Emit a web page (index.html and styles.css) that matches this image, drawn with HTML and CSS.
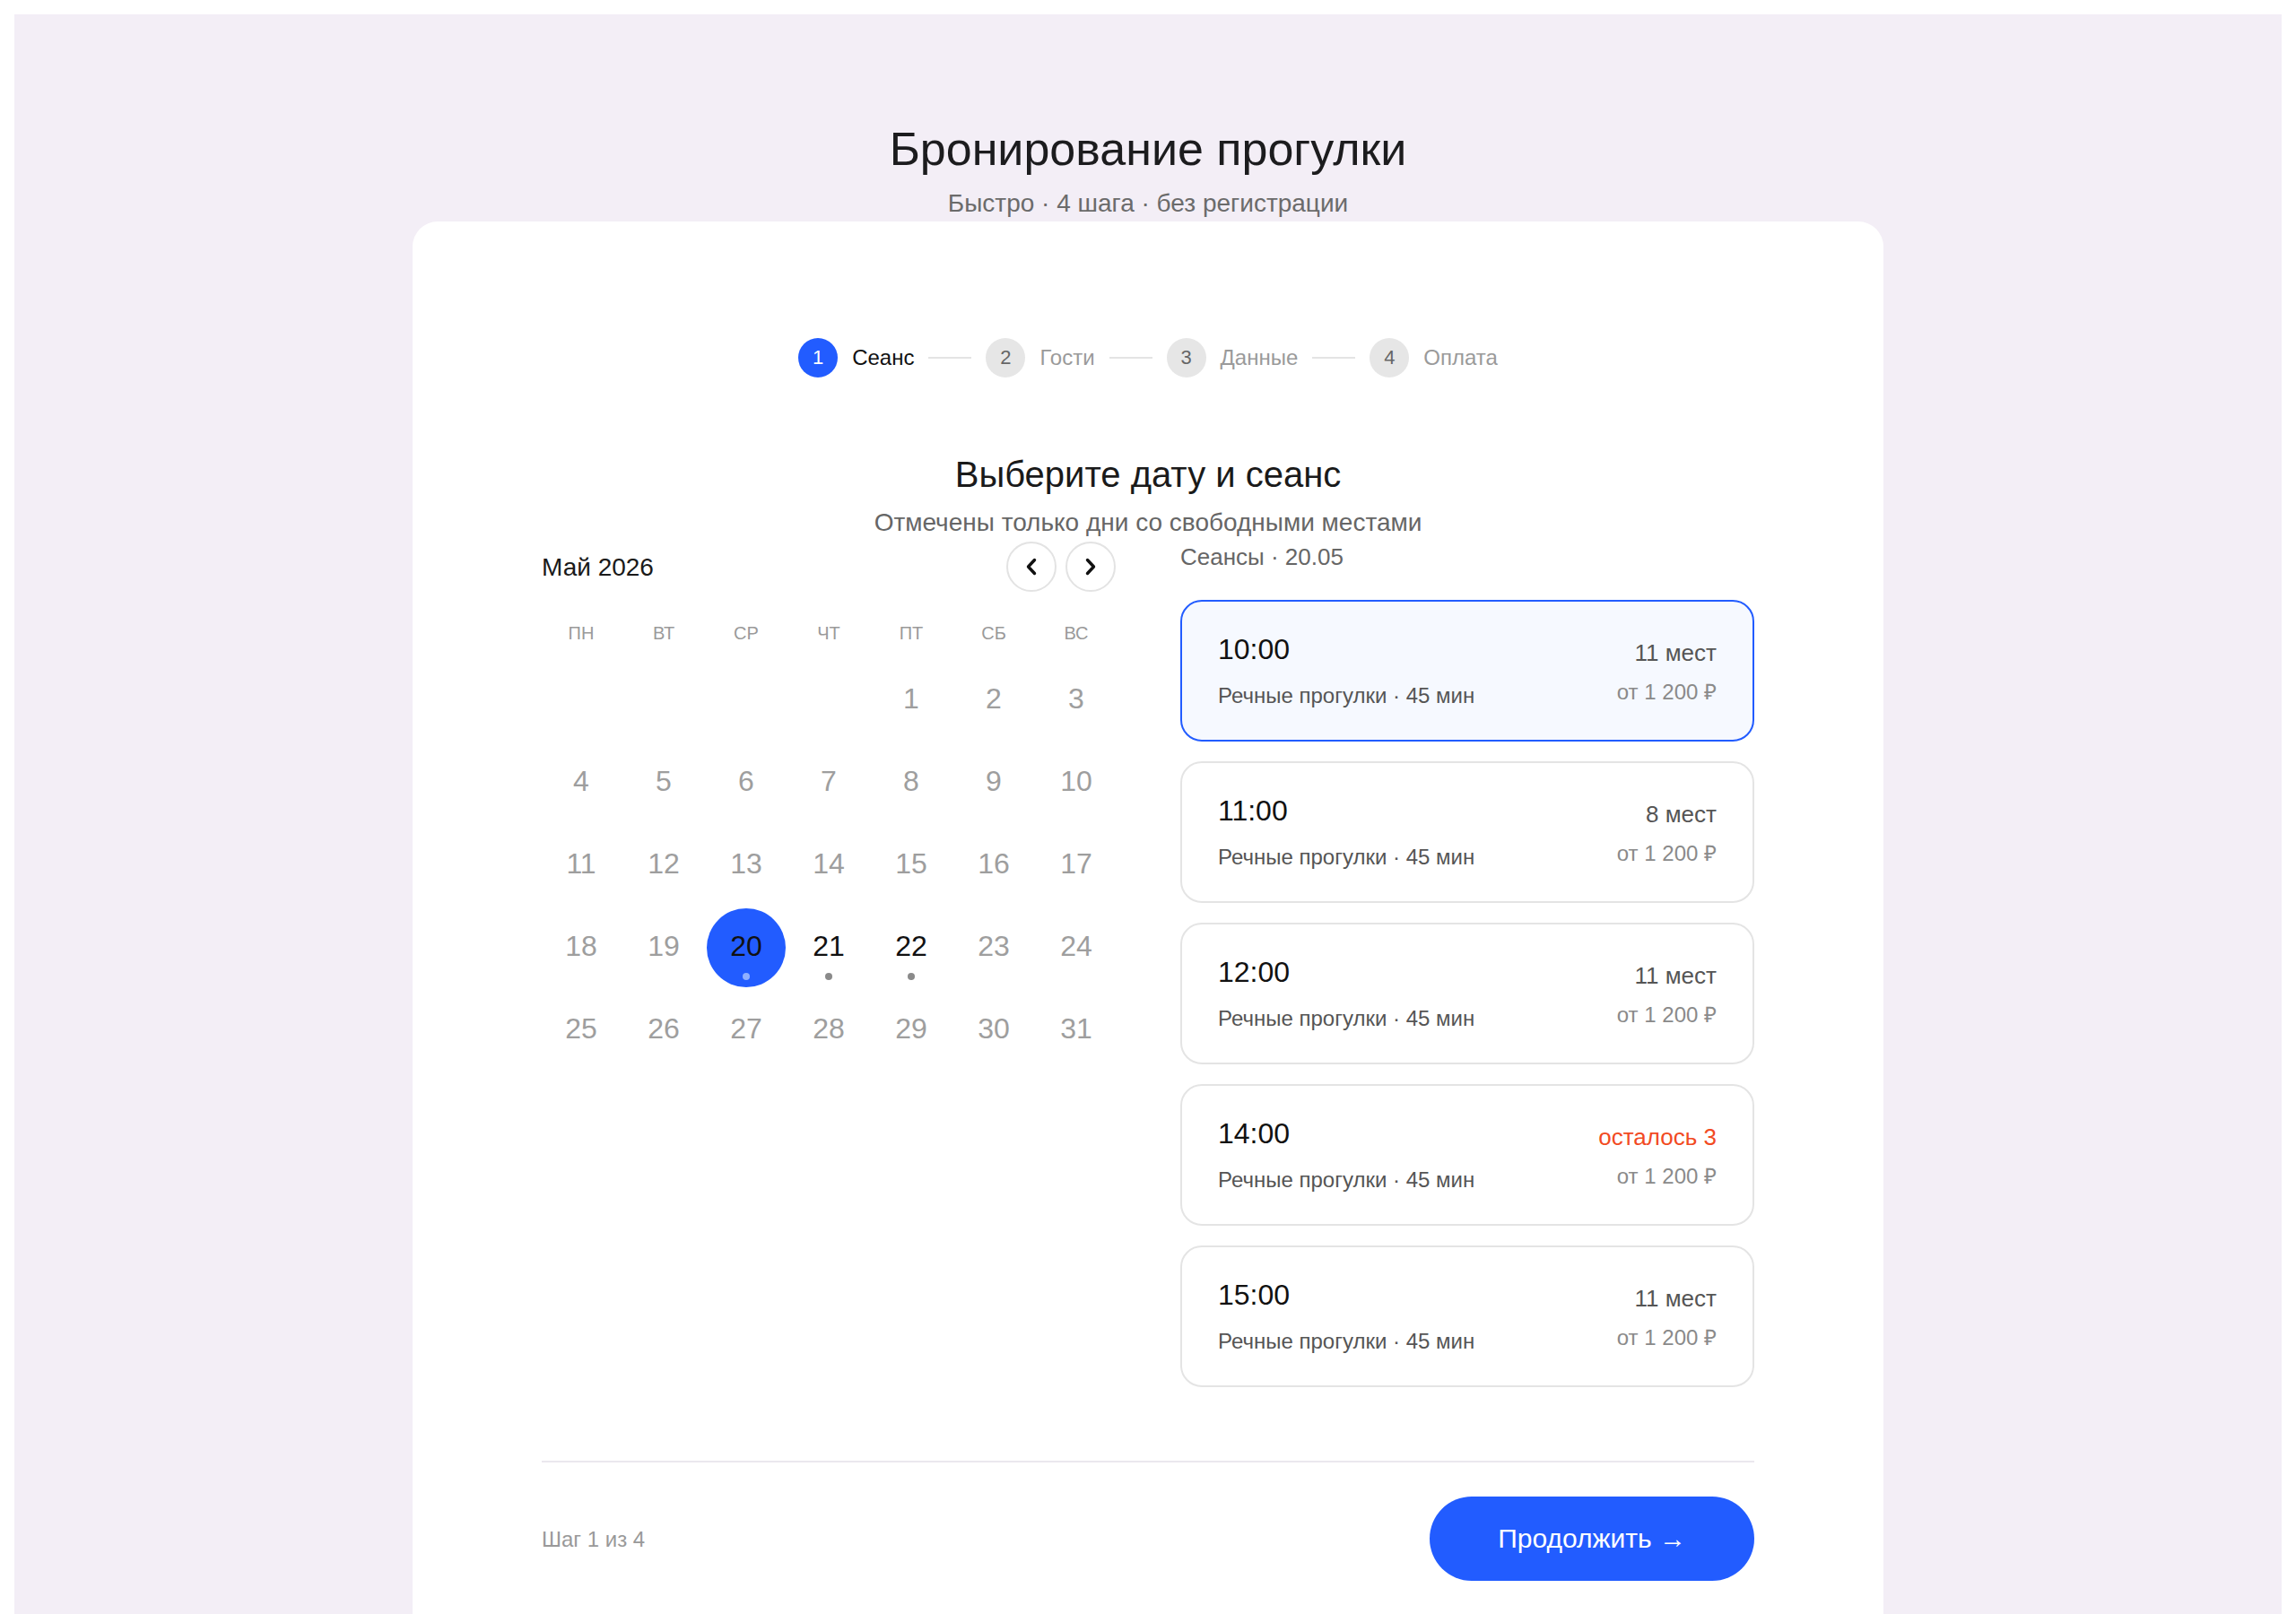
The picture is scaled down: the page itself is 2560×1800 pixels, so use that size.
FILE: index.html
```html
<!DOCTYPE html>
<html lang="ru">
<head>
<meta charset="utf-8">
<title>Бронирование прогулки</title>
<link rel="stylesheet" href="styles.css">
</head>
<body>
<div class="page">
  <header class="head">
    <h1 class="title">Бронирование прогулки</h1>
    <p class="subtitle">Быстро · 4 шага · без регистрации</p>
  </header>
  <main class="card">
    <nav class="stepper">
      <div class="step active"><span class="step-num">1</span><span>Сеанс</span></div>
      <span class="step-line"></span>
      <div class="step"><span class="step-num">2</span><span>Гости</span></div>
      <span class="step-line"></span>
      <div class="step"><span class="step-num">3</span><span>Данные</span></div>
      <span class="step-line"></span>
      <div class="step"><span class="step-num">4</span><span>Оплата</span></div>
    </nav>

    <h2 class="pick-title">Выберите дату и сеанс</h2>
    <p class="pick-sub">Отмечены только дни со свободными местами</p>

    <section class="booking">
      <div class="calendar">
        <div class="cal-head">
          <span class="cal-month">Май 2026</span>
          <div class="cal-nav">
            <button class="nav-btn" type="button" aria-label="Предыдущий месяц">
              <svg width="12" height="20" viewBox="0 0 12 20"><polyline points="9.5,2.5 2.5,10 9.5,17.5" fill="none" stroke="#111" stroke-width="3.4" stroke-linecap="round" stroke-linejoin="round"/></svg>
            </button>
            <button class="nav-btn" type="button" aria-label="Следующий месяц">
              <svg width="12" height="20" viewBox="0 0 12 20"><polyline points="2.5,2.5 9.5,10 2.5,17.5" fill="none" stroke="#111" stroke-width="3.4" stroke-linecap="round" stroke-linejoin="round"/></svg>
            </button>
          </div>
        </div>
        <div class="weekdays">
          <span>ПН</span><span>ВТ</span><span>СР</span><span>ЧТ</span><span>ПТ</span><span>СБ</span><span>ВС</span>
        </div>
        <div class="days">
          <span class="day empty"></span><span class="day empty"></span><span class="day empty"></span><span class="day empty"></span>
          <span class="day">1</span><span class="day">2</span><span class="day">3</span>
          <span class="day">4</span><span class="day">5</span><span class="day">6</span><span class="day">7</span><span class="day">8</span><span class="day">9</span><span class="day">10</span>
          <span class="day">11</span><span class="day">12</span><span class="day">13</span><span class="day">14</span><span class="day">15</span><span class="day">16</span><span class="day">17</span>
          <span class="day">18</span><span class="day">19</span>
          <span class="day selected">20<i class="dot"></i></span>
          <span class="day open">21<i class="dot"></i></span>
          <span class="day open">22<i class="dot"></i></span>
          <span class="day">23</span><span class="day">24</span>
          <span class="day">25</span><span class="day">26</span><span class="day">27</span><span class="day">28</span><span class="day">29</span><span class="day">30</span><span class="day">31</span>
        </div>
      </div>

      <div class="sessions-col">
        <div class="sessions-label">Сеансы · 20.05</div>
        <div class="sessions">
          <div class="session selected">
            <div class="s-left"><div class="s-time">10:00</div><div class="s-desc">Речные прогулки · 45 мин</div></div>
            <div class="s-right"><div class="s-seats">11 мест</div><div class="s-price">от 1 200 ₽</div></div>
          </div>
          <div class="session">
            <div class="s-left"><div class="s-time">11:00</div><div class="s-desc">Речные прогулки · 45 мин</div></div>
            <div class="s-right"><div class="s-seats">8 мест</div><div class="s-price">от 1 200 ₽</div></div>
          </div>
          <div class="session">
            <div class="s-left"><div class="s-time">12:00</div><div class="s-desc">Речные прогулки · 45 мин</div></div>
            <div class="s-right"><div class="s-seats">11 мест</div><div class="s-price">от 1 200 ₽</div></div>
          </div>
          <div class="session">
            <div class="s-left"><div class="s-time">14:00</div><div class="s-desc">Речные прогулки · 45 мин</div></div>
            <div class="s-right"><div class="s-seats low">осталось 3</div><div class="s-price">от 1 200 ₽</div></div>
          </div>
          <div class="session">
            <div class="s-left"><div class="s-time">15:00</div><div class="s-desc">Речные прогулки · 45 мин</div></div>
            <div class="s-right"><div class="s-seats">11 мест</div><div class="s-price">от 1 200 ₽</div></div>
          </div>
        </div>
      </div>
    </section>

    <footer class="footer">
      <span class="step-count">Шаг 1 из 4</span>
      <button class="btn" type="button">Продолжить →</button>
    </footer>
  </main>
</div>
</body>
</html>
```

FILE: styles.css
```css
* { box-sizing: border-box; }

html { background: #ffffff; }

body {
  margin: 16px;
  font-family: "Liberation Sans", Arial, sans-serif;
  color: #1a1a1a;
  background: #ffffff;
}

.page {
  background: #f3eef6;
  padding-top: 120px;
}

.head { text-align: center; }

.title {
  margin: 0;
  font-size: 52px;
  line-height: 60px;
  font-weight: 400;
  color: #1c1c1e;
}

.subtitle {
  margin: 13px 0 0;
  font-size: 28px;
  line-height: 36px;
  color: #6b6b6b;
}

.card {
  display: block;
  width: 1640px;
  margin: 2px auto 0;
  background: #ffffff;
  border-radius: 28px;
  padding: 130px 144px 80px;
}

/* stepper */
.stepper {
  display: flex;
  justify-content: center;
  align-items: center;
  gap: 16px;
  margin-bottom: 84px;
}

.step {
  display: flex;
  align-items: center;
  gap: 16px;
  font-size: 24px;
  line-height: 30px;
  color: #9a9a9a;
}

.step-num {
  width: 44px;
  height: 44px;
  border-radius: 50%;
  background: #e6e6e6;
  color: #666666;
  display: flex;
  align-items: center;
  justify-content: center;
  font-size: 22px;
}

.step.active { color: #111111; }
.step.active .step-num { background: #225cff; color: #ffffff; }

.step-line {
  width: 48px;
  height: 2px;
  background: #e4e4e4;
}

/* heading */
.pick-title {
  margin: 0;
  text-align: center;
  font-size: 40px;
  line-height: 48px;
  font-weight: 400;
  color: #1a1a1a;
}

.pick-sub {
  margin: 12px 0 0;
  text-align: center;
  font-size: 28px;
  line-height: 36px;
  color: #666666;
}

/* layout */
.booking {
  display: grid;
  grid-template-columns: 640px 640px;
  column-gap: 72px;
  align-items: start;
  margin-top: 3px;
}

/* calendar */
.cal-head {
  display: flex;
  justify-content: space-between;
  align-items: center;
  height: 56px;
}

.cal-month {
  font-size: 28px;
  color: #1a1a1a;
  padding-top: 2px;
}

.cal-nav {
  display: flex;
  gap: 10px;
}

.nav-btn {
  width: 56px;
  height: 56px;
  border-radius: 50%;
  border: 2px solid #e3e3e3;
  background: #ffffff;
  display: flex;
  align-items: center;
  justify-content: center;
  padding: 0;
}

.weekdays {
  display: grid;
  grid-template-columns: repeat(7, 88px);
  column-gap: 4px;
  margin-top: 34px;
  font-size: 20px;
  line-height: 24px;
  color: #9a9a9a;
  text-align: center;
}

.days {
  display: grid;
  grid-template-columns: repeat(7, 88px);
  gap: 4px;
  margin-top: 19px;
}

.day {
  position: relative;
  height: 88px;
  border-radius: 50%;
  display: flex;
  align-items: center;
  justify-content: center;
  padding-bottom: 3px;
  font-size: 32px;
  color: #9e9e9e;
}

.day.open { color: #111111; }
.day.selected { background: #225cff; color: #111111; }

.dot {
  position: absolute;
  left: 50%;
  bottom: 8px;
  width: 8px;
  height: 8px;
  margin-left: -4px;
  border-radius: 50%;
  background: #8a8a8a;
}

.day.selected .dot { background: #8fb0ff; }

/* sessions */
.sessions-label {
  margin-top: 1px;
  font-size: 26px;
  line-height: 32px;
  color: #666666;
}

.sessions {
  display: flex;
  flex-direction: column;
  gap: 22px;
  margin-top: 32px;
}

.session {
  display: flex;
  justify-content: space-between;
  align-items: center;
  height: 158px;
  padding: 33px 40px 33px;
  border: 2px solid #e4e4e4;
  border-radius: 24px;
  background: #ffffff;
}

.session.selected {
  border-color: #225cff;
  background: #f6f9ff;
}

.s-time {
  font-size: 32px;
  line-height: 40px;
  color: #111111;
}

.s-desc {
  margin-top: 16px;
  font-size: 24px;
  line-height: 32px;
  color: #555555;
}

.s-right {
  text-align: right;
  padding-top: 4px;
}

.s-seats {
  font-size: 26px;
  line-height: 32px;
  color: #555555;
}

.s-seats.low { color: #f24a22; }

.s-price {
  margin-top: 12px;
  font-size: 24px;
  line-height: 32px;
  color: #8a8a8a;
}

/* footer */
.footer {
  display: flex;
  justify-content: space-between;
  align-items: center;
  margin-top: 82px;
  padding-top: 38px;
  border-top: 2px solid #ebe8ee;
}

.step-count {
  font-size: 24px;
  color: #999999;
  padding-top: 2px;
}

.btn {
  height: 94px;
  padding: 0 76px;
  border: 0;
  border-radius: 48px;
  background: #225cff;
  color: #ffffff;
  font-family: "Liberation Sans", Arial, sans-serif;
  font-size: 30px;
}
```
